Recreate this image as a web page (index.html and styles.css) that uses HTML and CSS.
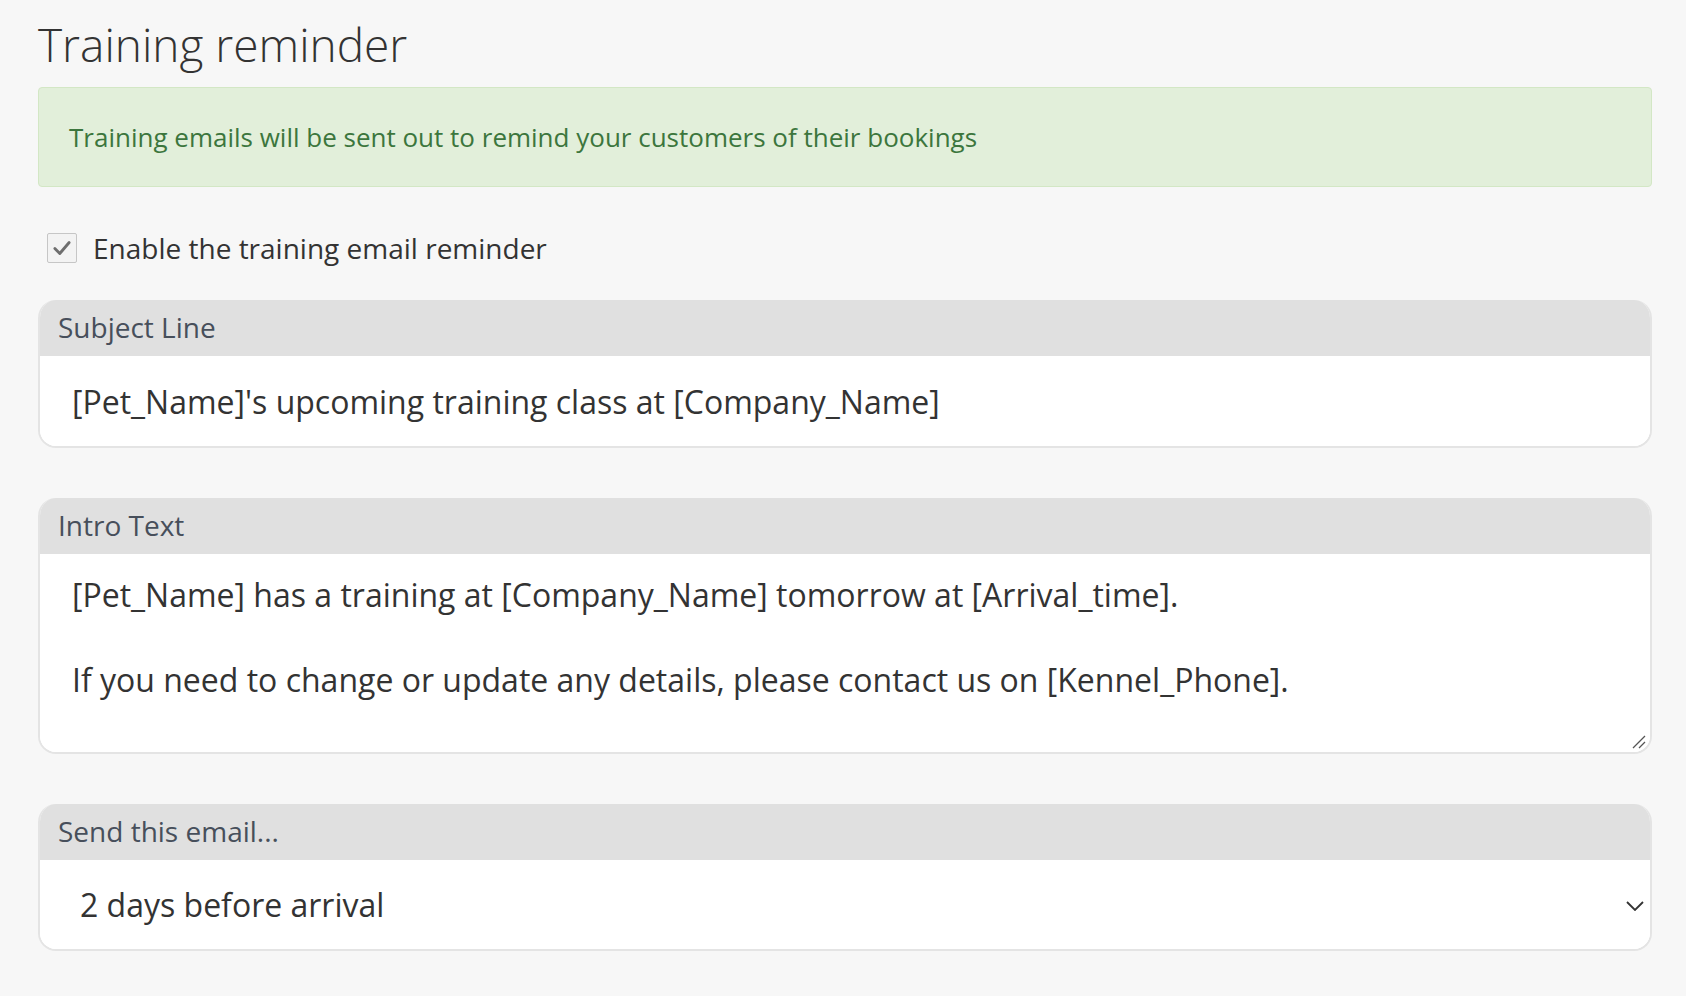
FILE: index.html
```html
<!DOCTYPE html>
<html lang="en">
<head>
<meta charset="utf-8">
<title>Training reminder</title>
<link rel="stylesheet" href="styles.css">
</head>
<body>
<main class="page">
  <h1 class="title">Training reminder</h1>
  <div class="alert">Training emails will be sent out to remind your customers of their bookings</div>

  <label class="check-row">
    <span class="checkbox">
      <svg viewBox="0 0 20 20" width="22" height="22"><path d="M3.5 10.5 L8 15 L16.5 5" fill="none" stroke="#6e6e6e" stroke-width="2.6" stroke-linecap="round" stroke-linejoin="round"/></svg>
    </span>
    <span class="check-label">Enable the training email reminder</span>
  </label>

  <section class="field">
    <div class="field-head">Subject Line</div>
    <input class="field-input" type="text" value="[Pet_Name]'s upcoming training class at [Company_Name]">
  </section>

  <section class="field">
    <div class="field-head">Intro Text</div>
    <div class="area-wrap">
      <textarea class="field-area">[Pet_Name] has a training at [Company_Name] tomorrow at [Arrival_time].

If you need to change or update any details, please contact us on [Kennel_Phone].</textarea>
      <svg class="grip" viewBox="0 0 14 14" width="14" height="14"><path d="M1 13 L13 1 M7 13 L13 7" fill="none" stroke="#555" stroke-width="1.3"/></svg>
    </div>
  </section>

  <section class="field">
    <div class="field-head">Send this email...</div>
    <div class="select-wrap">
      <select class="field-select">
        <option>2 days before arrival</option>
        <option>1 day before arrival</option>
      </select>
      <svg class="chevron" viewBox="0 0 18 10" width="18" height="10"><path d="M1 1 L9 9 L17 1" fill="none" stroke="#333" stroke-width="1.8"/></svg>
    </div>
  </section>
</main>
</body>
</html>
```

FILE: styles.css
```css
html, body {
  margin: 0;
  padding: 0;
  background: #f7f7f7;
}

body {
  font-family: "Open Sans", "Noto Sans", sans-serif;
  color: #333;
}

.page {
  padding: 0 34px 0 38px;
}

.title {
  margin: 13px 0 12px 0;
  font-size: 46px;
  font-weight: 300;
  line-height: normal;
  color: #333;
}

.alert {
  background: #e2efda;
  border: 1px solid #d3e7c5;
  border-radius: 4px;
  color: #3c763d;
  font-size: 26px;
  padding: 31px 30px;
  line-height: normal;
}

.check-row {
  display: flex;
  align-items: center;
  gap: 16px;
  margin: 42px 0 33px 9px;
}

.checkbox {
  width: 30px;
  height: 30px;
  border: 1px solid #c6c6c6;
  border-radius: 2px;
  background: #f3f3f3;
  display: flex;
  align-items: center;
  justify-content: center;
  box-sizing: border-box;
}

.check-label {
  font-size: 28px;
  color: #333;
}

.field {
  background: #fff;
  border: 2px solid #e4e4e4;
  border-top: none;
  border-radius: 18px;
  overflow: hidden;
  margin-bottom: 50px;
}

.field-head {
  background: #e0e0e0;
  height: 56px;
  padding: 0 18px;
  display: flex;
  align-items: center;
  font-size: 28px;
  color: #474f5b;
  padding-bottom: 2px;
  box-sizing: border-box;
}

.field-input {
  display: block;
  width: 100%;
  box-sizing: border-box;
  border: none;
  outline: none;
  background: #fff;
  font-family: inherit;
  font-size: 32px;
  color: #333;
  height: 90px;
  padding: 0 32px;
}

.area-wrap {
  position: relative;
}

.field-area {
  display: block;
  width: 100%;
  box-sizing: border-box;
  border: none;
  outline: none;
  background: #fff;
  font-family: inherit;
  font-size: 32px;
  line-height: 42.5px;
  color: #333;
  height: 198px;
  padding: 20px 32px 8px 32px;
  resize: none;
}

.grip {
  position: absolute;
  right: 4px;
  bottom: 3px;
  pointer-events: none;
}

.select-wrap {
  position: relative;
}

.field-select {
  display: block;
  width: 100%;
  box-sizing: border-box;
  border: none;
  outline: none;
  background: #fff;
  font-family: inherit;
  font-size: 32px;
  color: #333;
  height: 89px;
  padding: 0 40px;
  appearance: none;
  -webkit-appearance: none;
}

.chevron {
  position: absolute;
  right: 6px;
  top: 41px;
  pointer-events: none;
}
```
